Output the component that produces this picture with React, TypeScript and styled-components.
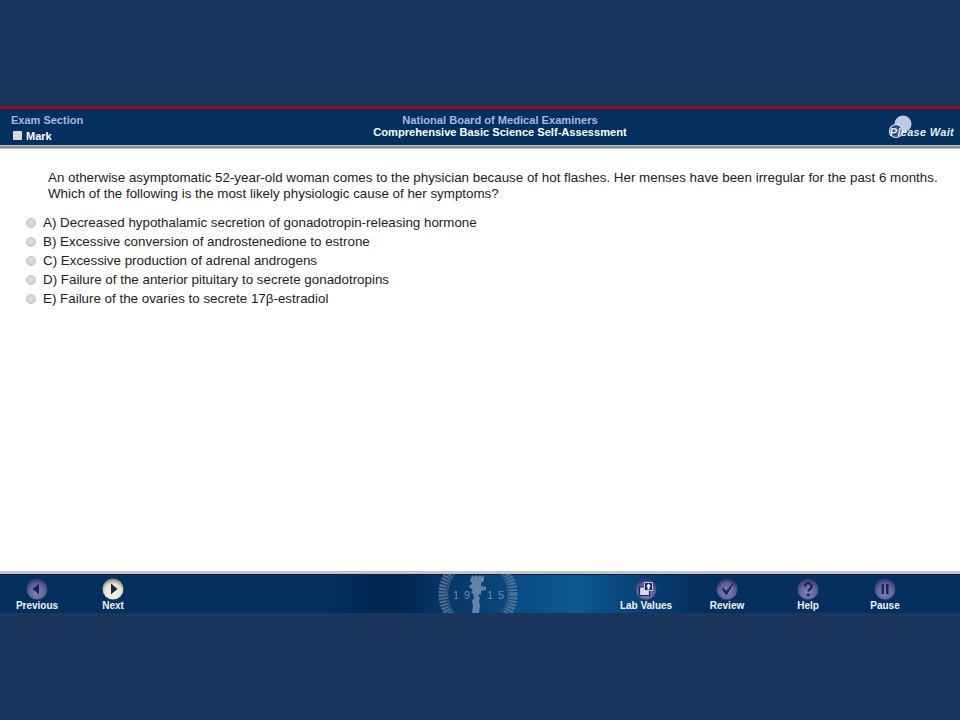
import * as React from "react";
import styled, { createGlobalStyle } from "styled-components";

const GlobalStyle = createGlobalStyle`
  html, body {
    margin: 0;
    padding: 0;
    background: #1a365d;
    font-family: "Liberation Sans", Arial, sans-serif;
  }
`;

const Page = styled.div`
  width: 960px;
  height: 720px;
  padding-top: 106px;
  box-sizing: border-box;
  overflow: hidden;
  background: #1a365d;
`;

const Window = styled.div`
  display: flex;
  flex-direction: column;
  height: 507px;
  background: #fff;
`;

const Header = styled.header`
  display: grid;
  grid-template-columns: 240px 520px 200px;
  height: 36px;
  flex: none;
  border-top: 3px solid #8f0f1f;
  background: #03305f;
`;

const HeaderEdge = styled.div`
  height: 4px;
  flex: none;
  background: linear-gradient(180deg, #d4d8d8 0%, #8a8a8a 45%, #8a8a8a 70%, #e4e4e4 100%);
`;

const SectionInfo = styled.div`
  padding: 5px 0 0 11px;
`;

const SectionName = styled.div`
  font-size: 11px;
  line-height: 13px;
  font-weight: bold;
  color: #a9b6de;
`;

const MarkRow = styled.label`
  display: flex;
  align-items: center;
  gap: 4px;
  margin-top: 3px;
  padding-left: 2px;
  font-size: 11px;
  line-height: 13px;
  font-weight: bold;
  color: #fff;
`;

const MarkBox = styled.span`
  display: block;
  width: 9px;
  height: 9px;
  margin-top: -3px;
  border-radius: 1px;
  background: #d8d8d8;
`;

const Titles = styled.div`
  padding-top: 5px;
  text-align: center;
  font-size: 11.1px;
  line-height: 12px;
  font-weight: bold;
`;

const ExamBoard = styled.div`
  color: #a9b6de;
`;

const ExamName = styled.div`
  color: #fff;
`;

const WaitArea = styled.div`
  display: flex;
  justify-content: flex-end;
  align-items: flex-end;
  padding: 0 6px 6px 0;
`;

const WaitLabel = styled.div`
  position: relative;
  font-size: 11px;
  line-height: 13px;
  font-weight: bold;
  font-style: italic;
  letter-spacing: 0.3px;
  color: #e8ecf6;
`;

const WaitSpinner = styled.svg`
  position: absolute;
  left: -2px;
  top: -11px;
  width: 24px;
  height: 25px;
`;

const WaitText = styled.span`
  position: relative;
`;

const Content = styled.main`
  flex: 1;
  padding: 21px 16px 0 0;
  color: #222;
`;

const Question = styled.p`
  margin: 0 0 0 48px;
  font-size: 13.36px;
  line-height: 16px;
`;

const Choices = styled.ul`
  display: flex;
  flex-direction: column;
  margin: 11px 0 0;
  padding: 0 0 0 26px;
  list-style: none;
`;

const Choice = styled.li`
  display: flex;
  align-items: center;
  height: 19px;
  font-size: 13.36px;
`;

const RadioDot = styled.span`
  display: block;
  flex: none;
  box-sizing: border-box;
  width: 10px;
  height: 10px;
  margin-right: 7px;
  border: 1px solid #c4c4c4;
  border-radius: 50%;
  background: radial-gradient(circle at 50% 40%, #e2e2e2, #c8c8c8);
`;

const Footer = styled.footer`
  display: block;
  height: 39px;
  flex: none;
  position: relative;
  border-top: 3px solid #c4c4c4;
  box-shadow: inset 0 1px 0 #0a1f3f;
  background: linear-gradient(
    90deg,
    #03305f 0%,
    #03305f 34%,
    #02264f 41%,
    #0a4c84 54%,
    #0c5890 60%,
    #08437a 66%,
    #03305f 72%,
    #03305f 100%
  );
`;

const Seal = styled.svg`
  position: absolute;
  left: 438px;
  top: 0;
  width: 80px;
  height: 39px;
  opacity: 0.85;
`;

const NavButton = styled.button<{ $center: number }>`
  position: absolute;
  left: ${(p) => p.$center - 40}px;
  top: 4px;
  display: flex;
  flex-direction: column;
  align-items: center;
  width: 80px;
  padding: 0;
  border: 0;
  background: none;
  font-family: inherit;
  font-size: 10px;
  line-height: 11px;
  font-weight: bold;
  color: #f0f3fa;
`;

const NavIcon = styled.svg`
  display: block;
  width: 22px;
  height: 22px;
`;

const answers = [
  "A) Decreased hypothalamic secretion of gonadotropin-releasing hormone",
  "B) Excessive conversion of androstenedione to estrone",
  "C) Excessive production of adrenal androgens",
  "D) Failure of the anterior pituitary to secrete gonadotropins",
  "E) Failure of the ovaries to secrete 17β-estradiol",
];

const Orb = ({ light, children }: { light?: boolean; children: React.ReactNode }) => {
  const id = light ? "orbLight" : "orbDark";
  return (
    <NavIcon viewBox="0 0 22 22">
      <defs>
        <radialGradient id={id} cx="50%" cy="65%" r="62%">
          <stop offset="0%" stopColor={light ? "#f8f6e2" : "#8385bb"} />
          <stop offset="65%" stopColor={light ? "#e6e4cc" : "#5e6099"} />
          <stop offset="100%" stopColor={light ? "#7f8a7c" : "#2f3368"} />
        </radialGradient>
      </defs>
      <circle cx="11" cy="11" r="10.5" fill={`url(#${id})`} />
      {children}
    </NavIcon>
  );
};

const ICON = "#1a2450";

const App = () => {
  return (
    <Page>
      <GlobalStyle />
      <Window>
        <Header>
          <SectionInfo>
            <SectionName>Exam Section</SectionName>
            <MarkRow>
              <MarkBox />
              Mark
            </MarkRow>
          </SectionInfo>
          <Titles>
            <ExamBoard>National Board of Medical Examiners</ExamBoard>
            <ExamName>Comprehensive Basic Science Self-Assessment</ExamName>
          </Titles>
          <WaitArea>
            <WaitLabel>
              <WaitSpinner viewBox="0 0 24 25">
                <circle cx="15" cy="9" r="8.5" fill="#c0c8e8" />
                <circle cx="8" cy="16" r="6.500" fill="#34507f" stroke="#e4e8f6" strokeWidth="1.200" />
              </WaitSpinner>
              <WaitText>Please Wait</WaitText>
            </WaitLabel>
          </WaitArea>
        </Header>
        <HeaderEdge />
        <Content>
          <Question>
            An otherwise asymptomatic 52-year-old woman comes to the physician because of hot flashes. Her menses have been irregular for the past 6 months.
            <br />
            Which of the following is the most likely physiologic cause of her symptoms?
          </Question>
          <Choices>
            {answers.map((a) => (
              <Choice key={a}>
                <RadioDot />
                {a}
              </Choice>
            ))}
          </Choices>
        </Content>
        <Footer>
          <Seal viewBox="0 0 80 39">
            <circle cx="40" cy="20" r="35.5" fill="none" stroke="#5b7a99" strokeWidth="8" strokeDasharray="2.2 1" />
            <circle cx="40" cy="20" r="30.500" fill="none" stroke="#4d7096" strokeWidth="1" />
            <path
              d="M34 1l2 2 2-2 2 2 2-2 2 2 2-2v6l-3 2v3l5 1v3l-5 1v3l-3 1 2 3-1 3 1 5-1 7h-7l1-8-1-4 2-3-1-4-2-2 2-2-4-3 1-2 2-1V9l-2-2z"
              fill="#7290ae"
            />
            <text x="15" y="25" fontSize="11" letterSpacing="5" fill="#7c98b5" fontFamily="Liberation Sans">
              19
            </text>
            <text x="49" y="25" fontSize="11" letterSpacing="5" fill="#7c98b5" fontFamily="Liberation Sans">
              15
            </text>
          </Seal>
          <NavButton $center={37}>
            <Orb>
              <path d="M13 5.500v11l-6.500-5.500z" fill={ICON} />
            </Orb>
            Previous
          </NavButton>
          <NavButton $center={113}>
            <Orb light>
              <path d="M9 5.500v11l6.500-5.500z" fill={ICON} />
            </Orb>
            Next
          </NavButton>
          <NavButton $center={646}>
            <Orb>
              <path d="M4.500 9h10v8.500h-10z" fill="#d8d8e6" stroke={ICON} strokeWidth="1.200" />
              <path d="M9.500 4.500h8v8h-8z" fill={ICON} stroke="#e8e8f2" strokeWidth="0.800" />
              <path d="M13.500 5.500l2.500 3h-1.500v3h-2v-3h-1.500z" fill="#fff" />
            </Orb>
            Lab Values
          </NavButton>
          <NavButton $center={727}>
            <Orb>
              <path d="M5.500 11l2-1 2.500 3 7-8 .5 .5-7 12z" fill={ICON} />
            </Orb>
            Review
          </NavButton>
          <NavButton $center={808}>
            <Orb>
              <path
                d="M7.800 8.500c0-4.500 6.800-4.500 6.800 0 0 2.800-3.200 2.500-3.200 5"
                fill="none"
                stroke={ICON}
                strokeWidth="2.200"
              />
              <circle cx="11.300" cy="16.800" r="1.500" fill={ICON} />
            </Orb>
            Help
          </NavButton>
          <NavButton $center={885}>
            <Orb>
              <path d="M7.500 6h2.500v10H7.500zM12 6h2.500v10H12z" fill={ICON} />
            </Orb>
            Pause
          </NavButton>
        </Footer>
      </Window>
    </Page>
  );
};

export default App;
